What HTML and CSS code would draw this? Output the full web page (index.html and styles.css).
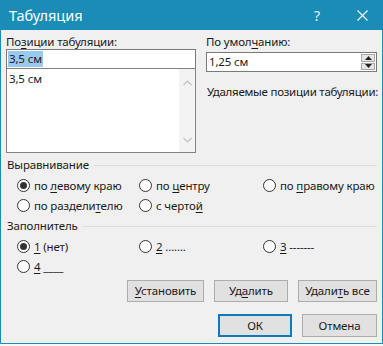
FILE: index.html
```html
<!DOCTYPE html>
<html lang="ru">
<head>
<meta charset="utf-8">
<title>Табуляция</title>
<link rel="stylesheet" href="styles.css">
</head>
<body>
<div class="window">
  <div class="titlebar">
    <span class="title">Табуляция</span>
    <span class="help">?</span>
    <span class="close"><svg width="11" height="11" viewBox="0 0 11 11"><path d="M0.5 0.5 L10.5 10.5 M10.5 0.5 L0.5 10.5" stroke="#fff" stroke-width="1.1" fill="none"/></svg></span>
  </div>
  <div class="content">
    <div class="top">
      <div class="col-left">
        <div class="label">По<u>з</u>иции табуляции:</div>
        <div class="textbox"><span class="sel">3,5 см</span></div>
        <div class="listbox">
          <div class="list-items"><div class="item">3,5 см</div></div>
          <div class="scroll">
            <svg width="9" height="6" viewBox="0 0 9 6"><path d="M0.5 5 L4.5 1 L8.5 5" stroke="#c2c2c2" stroke-width="1.2" fill="none"/></svg>
            <svg width="9" height="6" viewBox="0 0 9 6"><path d="M0.5 1 L4.5 5 L8.5 1" stroke="#c2c2c2" stroke-width="1.2" fill="none"/></svg>
          </div>
        </div>
      </div>
      <div class="col-right">
        <div class="label">По умол<u>ч</u>анию:</div>
        <div class="spinbox">
          <span class="spin-value">1,25 см</span>
          <span class="spin-btns">
            <span class="spin-btn"><svg width="7" height="4" viewBox="0 0 7 4"><path d="M0 4 L3.5 0 L7 4 Z" fill="#222"/></svg></span>
            <span class="spin-btn"><svg width="7" height="4" viewBox="0 0 7 4"><path d="M0 0 L3.5 4 L7 0 Z" fill="#222"/></svg></span>
          </span>
        </div>
        <div class="label removed">Удаляемые позиции табуляции:</div>
      </div>
    </div>

    <div class="group-head"><span>Выравнивание</span><i class="rule"></i></div>
    <div class="radios">
      <label class="radio"><span class="dot checked"></span><span>по <u>л</u>евому краю</span></label>
      <label class="radio"><span class="dot"></span><span>по <u>ц</u>ентру</span></label>
      <label class="radio"><span class="dot"></span><span>по <u>п</u>равому краю</span></label>
      <label class="radio"><span class="dot"></span><span>по раздели<u>т</u>елю</span></label>
      <label class="radio"><span class="dot"></span><span>с черто<u>й</u></span></label>
    </div>

    <div class="group-head fill-head"><span>Заполнитель</span><i class="rule"></i></div>
    <div class="radios">
      <label class="radio"><span class="dot checked"></span><span><u>1</u> (нет)</span></label>
      <label class="radio"><span class="dot"></span><span><u>2</u> .......</span></label>
      <label class="radio"><span class="dot"></span><span><u>3</u> -------</span></label>
      <label class="radio"><span class="dot"></span><span><u>4</u> ____</span></label>
    </div>

    <div class="btn-row">
      <span class="btn w-set"><span><u>У</u>становить</span></span>
      <span class="btn w-del"><span>Уд<u>а</u>лить</span></span>
      <span class="btn w-delall"><span>Удали<u>т</u>ь все</span></span>
    </div>
    <div class="btn-row ok-row">
      <span class="btn w-ok default">ОК</span>
      <span class="btn w-cancel">Отмена</span>
    </div>
  </div>
</div>
</body>
</html>
```
FILE: styles.css
```css
* { box-sizing: border-box; }
html, body { margin: 0; padding: 0; }
body {
  width: 383px;
  height: 346px;
  background: #f7f7f7;
  font-family: "Noto Sans", "Open Sans", sans-serif;
  font-size: 11.5px;
  letter-spacing: -0.15px;
  color: #1a1a1a;
  overflow: hidden;
}
u { text-decoration: underline; text-underline-offset: 2px; }
.window {
  width: 383px;
  height: 344px;
  background: #f0f0f0;
  border: 1px solid #1b8cb6;
  border-top: none;
  display: flex;
  flex-direction: column;
}
.titlebar {
  height: 30px;
  background: #1b8cb6;
  margin: 0 -1px;
  display: flex;
  align-items: center;
  color: #fff;
  padding-left: 9px;
  letter-spacing: 0;
}
.title { font-size: 14.5px; flex: 1; padding-bottom: 1px; }
.help { font-size: 14px; width: 14px; margin-right: 29px; color: #e8f3f8; }
.close { width: 11px; margin-right: 15px; display: flex; }
.content { padding: 3px 5px 0 5px; flex: 1; }
.top { display: flex; gap: 10px; }
.col-left { width: 190px; display: flex; flex-direction: column; }
.col-right { flex: 1; display: flex; flex-direction: column; min-width: 0; }
.label { height: 15px; line-height: 15px; margin-top: 1px; white-space: nowrap; }
.textbox {
  margin-top: 0;
  height: 20px;
  background: #fff;
  border: 1px solid #7a7a7a;
  padding: 1px 0 0 1px;
  line-height: 16px;
}
.sel { background: #99c9ef; padding: 0 1px; display: inline-block; height: 16px; }
.listbox {
  margin-top: -1px;
  height: 85px;
  background: #fff;
  border: 1px solid #828282;
  display: flex;
}
.list-items { flex: 1; padding: 2px 0 0 2px; line-height: 15px; }
.scroll {
  width: 16px;
  background: #f3f3f3;
  display: flex;
  flex-direction: column;
  align-items: center;
  justify-content: space-between;
  padding: 11px 0 9px 1px;
}
.spinbox {
  margin-top: 3px;
  height: 20px;
  background: #fff;
  border: 1px solid #7a7a7a;
  display: flex;
  align-items: center;
  padding-left: 2px;
}
.spin-value { flex: 1; line-height: 16px; }
.spin-btns { width: 14px; height: 18px; display: flex; flex-direction: column; margin-right: 1px; gap: 1px; padding: 1px 0; }
.spin-btn {
  flex: 1;
  background: #e6e6e6;
  border: 1px solid #a8a8a8;
  display: flex;
  align-items: center;
  justify-content: center;
}
.removed { margin-top: 12px; padding-left: 1px; letter-spacing: -0.25px; }
.group-head {
  display: flex;
  align-items: center;
  height: 15px;
  line-height: 15px;
  margin-top: 4px;
  padding-left: 1px;
}
.group-head .rule { flex: 1; height: 1px; background: #dcdcdc; margin-left: 5px; margin-top: 1px; }
.fill-head { margin-top: 3px; }
.radios {
  display: grid;
  grid-template-columns: 122px 124px 1fr;
  padding-left: 11px;
  margin-top: 3px;
}
.radio {
  height: 20px;
  display: flex;
  align-items: center;
  white-space: nowrap;
}
.dot {
  width: 13px;
  height: 13px;
  border: 1px solid #333;
  border-radius: 50%;
  background: #fff;
  margin-right: 4px;
  display: flex;
  align-items: center;
  justify-content: center;
  flex: none;
}
.dot.checked::after {
  content: "";
  width: 7px;
  height: 7px;
  border-radius: 50%;
  background: #333;
}
.btn-row {
  display: flex;
  justify-content: flex-end;
  gap: 10px;
  margin-top: 4px;
}
.btn {
  height: 22px;
  background: #e1e1e1;
  border: 1px solid #adadad;
  display: flex;
  align-items: center;
  justify-content: center;
  white-space: nowrap;
  padding-bottom: 1px;
}
.w-set { width: 77px; }
.w-del { width: 74px; }
.w-delall { width: 79px; }
.ok-row { margin-top: 12px; gap: 10px; }
.w-ok { width: 74px; height: 23px; }
.w-cancel { width: 75px; height: 23px; }
.default { border: 2px solid #0f7ab8; }
```
